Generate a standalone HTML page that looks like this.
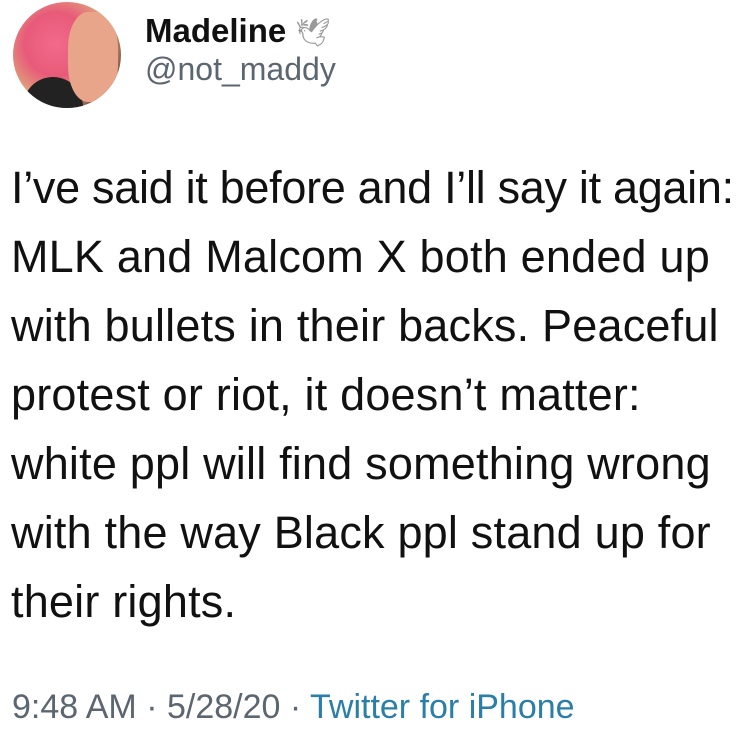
<!DOCTYPE html>
<html><head><meta charset="utf-8"><style>
html,body{margin:0;padding:0;background:#fff;width:750px;height:750px;overflow:hidden}
body{position:relative;font-family:"Liberation Sans",Arial,sans-serif}
.av{position:absolute;left:13px;top:2px;width:108px;height:106px;border-radius:50%;overflow:hidden;background:radial-gradient(circle at 40% 40%,#f26a8a 0%,#e85a7a 35%,#e0a07a 60%,#3a2a2a 85%)}
.name{position:absolute;left:145px;top:14px;font-size:33px;line-height:1;font-weight:bold;color:#111;white-space:nowrap}
.handle{position:absolute;left:145px;top:53px;font-size:32px;line-height:1;color:#5b6670}
.l{position:absolute;left:11px;font-size:45px;line-height:1;color:#111;white-space:nowrap;letter-spacing:0.2px}
.ts{position:absolute;left:12px;top:690px;font-size:34px;line-height:1;color:#5b6670;white-space:nowrap}
.ts span{color:#2b7ea8}
</style></head><body>
<div class="av">
<div style="position:absolute;left:10px;top:75px;width:60px;height:40px;background:#222;border-radius:30px 30px 0 0"></div>
<div style="position:absolute;left:55px;top:10px;width:50px;height:90px;background:#e8a58a;border-radius:40%"></div>
</div>
<div class="name">Madeline <span style="font-weight:normal;color:#999;font-size:28px">🕊</span></div>
<div class="handle">@not_maddy</div>
<div class="l" style="top:165px;letter-spacing:-0.3px">I’ve said it before and I’ll say it again:</div>
<div class="l" style="top:234px">MLK and Malcom X both ended up</div>
<div class="l" style="top:303px">with bullets in their backs. Peaceful</div>
<div class="l" style="top:372px">protest or riot, it doesn’t matter:</div>
<div class="l" style="top:441px">white ppl will find something wrong</div>
<div class="l" style="top:510px">with the way Black ppl stand up for</div>
<div class="l" style="top:579px">their rights.</div>
<div class="ts">9:48 AM · 5/28/20 · <span>Twitter for iPhone</span></div>
</body></html>
